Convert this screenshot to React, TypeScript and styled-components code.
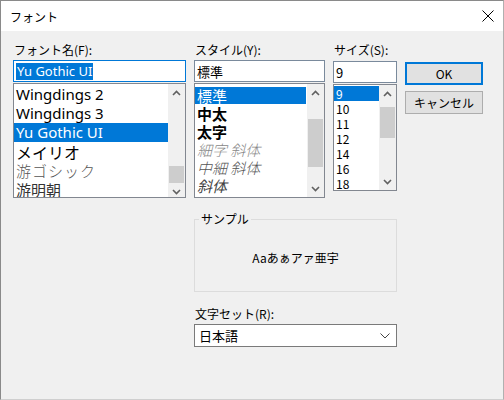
import React from "react";
import styled, { createGlobalStyle } from "styled-components";

const Global = createGlobalStyle`
  html, body { margin: 0; padding: 0; background: #ffffff; }
  body { font-family: "Noto Sans CJK JP", "Noto Sans", sans-serif; }
  * { box-sizing: border-box; }
`;

const Window = styled.div`
  width: 504px;
  height: 400px;
  border: 1px solid #8a8a8a;
  border-bottom-color: #cfcfcf;
  border-right-color: #b0b0b0;
  background: #f0f0f0;
  display: flex;
  flex-direction: column;
`;

const TitleBar = styled.div`
  height: 30px;
  background: #ffffff;
  display: flex;
  align-items: center;
  justify-content: space-between;
  padding: 0 9px 0 9px;
  font-size: 12px;
  color: #000;
`;

const Body = styled.div`
  display: grid;
  grid-template-columns: 173px 131px 64px 78px;
  grid-template-rows: auto auto auto;
  column-gap: 8px;
  padding: 11px 0 0 12px;
  font-size: 12px;
  color: #000;
`;

const Column = styled.div`
  display: flex;
  flex-direction: column;
`;

const Label = styled.div`
  height: 18px;
  line-height: 16px;
  font-size: 12px;
  padding-left: 1px;
`;

const Input = styled.div<{ $focus?: boolean }>`
  height: 22px;
  background: #fff;
  border: 1px solid ${(p) => (p.$focus ? "#0078d7" : "#7a8a9c")};
  display: flex;
  align-items: center;
  padding-left: 2px;
  font-size: 13px;
  line-height: 1;
`;

const InputSel = styled.span`
  background: #0078d7;
  color: #fff;
  padding: 1px 1px;
  line-height: 15px;
  font-family: "Noto Sans", sans-serif;
`;

const ListBox = styled.div<{ $h: number }>`
  height: ${(p) => p.$h}px;
  margin-top: 1px;
  background: #fff;
  border: 1px solid #828790;
  display: flex;
  overflow: hidden;
`;

const Items = styled.div`
  flex: 1;
  display: flex;
  flex-direction: column;
  min-width: 0;
`;

const Item = styled.div<{
  $h: number;
  $sel?: boolean;
  $size?: number;
  $weight?: number;
  $italic?: boolean;
  $color?: string;
  $family?: string;
  $spacing?: number;
}>`
  height: ${(p) => p.$h}px;
  flex: none;
  display: flex;
  align-items: center;
  padding-left: 2px;
  white-space: nowrap;
  line-height: 1;
  overflow: hidden;
  font-family: ${(p) => p.$family || `"Noto Sans CJK JP", "Noto Sans", sans-serif`};
  font-size: ${(p) => p.$size || 12}px;
  font-weight: ${(p) => p.$weight || 400};
  font-style: ${(p) => (p.$italic ? "italic" : "normal")};
  letter-spacing: ${(p) => p.$spacing || 0}px;
  background: ${(p) => (p.$sel ? "#0078d7" : "transparent")};
  color: ${(p) => (p.$sel ? "#fff" : p.$color || "#000")};
`;

const ScrollBar = styled.div`
  width: 17px;
  flex: none;
  background: #f0f0f0;
  display: flex;
  flex-direction: column;
`;

const Arrow = styled.div`
  height: 17px;
  flex: none;
  display: flex;
  align-items: center;
  justify-content: center;
`;

const Track = styled.div<{ $top: number }>`
  flex: 1;
  display: flex;
  flex-direction: column;
  padding: ${(p) => p.$top}px 1px 0 1px;
`;

const Thumb = styled.div<{ $h: number }>`
  height: ${(p) => p.$h}px;
  background: #cdcdcd;
`;

const Chevron = ({ up }: { up?: boolean }) => (
  <svg width="9" height="6" viewBox="0 0 9 6">
    <path
      d={up ? "M1 5 L4.5 1.5 L8 5" : "M1 1 L4.5 4.5 L8 1"}
      stroke="#606060"
      strokeWidth="1.6"
      fill="none"
    />
  </svg>
);

const Scroller = ({ top, h }: { top: number; h: number }) => (
  <ScrollBar>
    <Arrow>
      <Chevron up />
    </Arrow>
    <Track $top={top}>
      <Thumb $h={h} />
    </Track>
    <Arrow>
      <Chevron />
    </Arrow>
  </ScrollBar>
);

const ButtonCol = styled.div`
  display: flex;
  flex-direction: column;
  gap: 6px;
  padding-top: 20px;
`;

const Button = styled.div<{ $default?: boolean }>`
  height: 23px;
  background: #e1e1e1;
  border: ${(p) => (p.$default ? "2px solid #0078d7" : "1px solid #adadad")};
  display: flex;
  align-items: center;
  justify-content: center;
  font-size: 12px;
  color: #000;
`;

const SampleGroup = styled.fieldset`
  grid-column: 2 / span 2;
  margin: 14px 0 0 0;
  padding: 0;
  height: 80px;
  border: 1px solid #dcdcdc;
  display: flex;
  align-items: center;
  justify-content: center;
`;

const Legend = styled.legend`
  font-size: 12px;
  padding: 0 2px;
  margin-left: 4px;
  line-height: 14px;
`;

const SampleText = styled.div`
  font-size: 12px;
  padding-bottom: 6px;
  margin-top: 4px;
`;

const CharsetCol = styled.div`
  grid-column: 2 / span 2;
  display: flex;
  flex-direction: column;
  margin-top: 14px;
`;

const Combo = styled.div`
  height: 23px;
  background: #fff;
  border: 1px solid #7a7a7a;
  display: flex;
  align-items: center;
  justify-content: space-between;
  padding: 0 6px 0 4px;
  font-size: 13px;
  line-height: 1;
`;

const CloseX = () => (
  <svg width="12" height="12" viewBox="0 0 12 12">
    <path d="M0.5 0.5 L11.5 11.5 M11.5 0.5 L0.5 11.5" stroke="#000" strokeWidth="1" />
  </svg>
);

export default function App() {
  const segoe = `"Noto Sans", "Open Sans", sans-serif`;
  return (
    <>
      <Global />
      <Window>
        <TitleBar>
          <span>フォント</span>
          <CloseX />
        </TitleBar>
        <Body>
          <Column>
            <Label>フォント名(F):</Label>
            <Input $focus>
              <InputSel>Yu Gothic UI</InputSel>
            </Input>
            <ListBox $h={115}>
              <Items>
                <Item $h={19} $size={15} $family={segoe} style={{ marginTop: 1 }}>Wingdings 2</Item>
                <Item $h={19} $size={15} $family={segoe}>Wingdings 3</Item>
                <Item $h={19} $size={15} $family={segoe} $sel>Yu Gothic UI</Item>
                <Item $h={19} $size={16}>メイリオ</Item>
                <Item $h={19} $size={15} $weight={300} $color="#555" $spacing={1}>游ゴシック</Item>
                <Item $h={19} $size={15} $color="#333">游明朝</Item>
              </Items>
              <Scroller top={65} h={17} />
            </ListBox>
          </Column>
          <Column>
            <Label>スタイル(Y):</Label>
            <Input>標準</Input>
            <ListBox $h={115}>
              <Items>
                <Item $h={17} $size={15} $sel style={{ marginTop: 3, marginRight: 1 }}>標準</Item>
                <Item $h={18} $size={15} $weight={700}>中太</Item>
                <Item $h={18} $size={15} $weight={700}>太字</Item>
                <Item $h={18} $size={15} $weight={300} $italic $color="#888">細字 斜体</Item>
                <Item $h={18} $size={15} $weight={300} $italic $color="#555">中細 斜体</Item>
                <Item $h={18} $size={15} $italic $color="#444">斜体</Item>
              </Items>
              <Scroller top={18} h={48} />
            </ListBox>
          </Column>
          <Column>
            <Label>サイズ(S):</Label>
            <Input style={{ marginTop: 1 }}>9</Input>
            <ListBox $h={107}>
              <Items>
                <Item $h={15} $size={12} $sel style={{ marginTop: 1 }}>9</Item>
                <Item $h={15} $size={12}>10</Item>
                <Item $h={15} $size={12}>11</Item>
                <Item $h={15} $size={12}>12</Item>
                <Item $h={15} $size={12}>14</Item>
                <Item $h={15} $size={12}>16</Item>
                <Item $h={15} $size={12}>18</Item>
              </Items>
              <Scroller top={5} h={31} />
            </ListBox>
          </Column>
          <ButtonCol>
            <Button $default>OK</Button>
            <Button>キャンセル</Button>
          </ButtonCol>
          <SampleGroup>
            <Legend>サンプル</Legend>
            <SampleText>Aaあぁアァ亜宇</SampleText>
          </SampleGroup>
          <CharsetCol>
            <Label>文字セット(R):</Label>
            <Combo>
              <span>日本語</span>
              <svg width="10" height="6" viewBox="0 0 10 6">
                <path d="M0.5 0.5 L5 5 L9.5 0.5" stroke="#444" strokeWidth="1" fill="none" />
              </svg>
            </Combo>
          </CharsetCol>
        </Body>
      </Window>
    </>
  );
}
